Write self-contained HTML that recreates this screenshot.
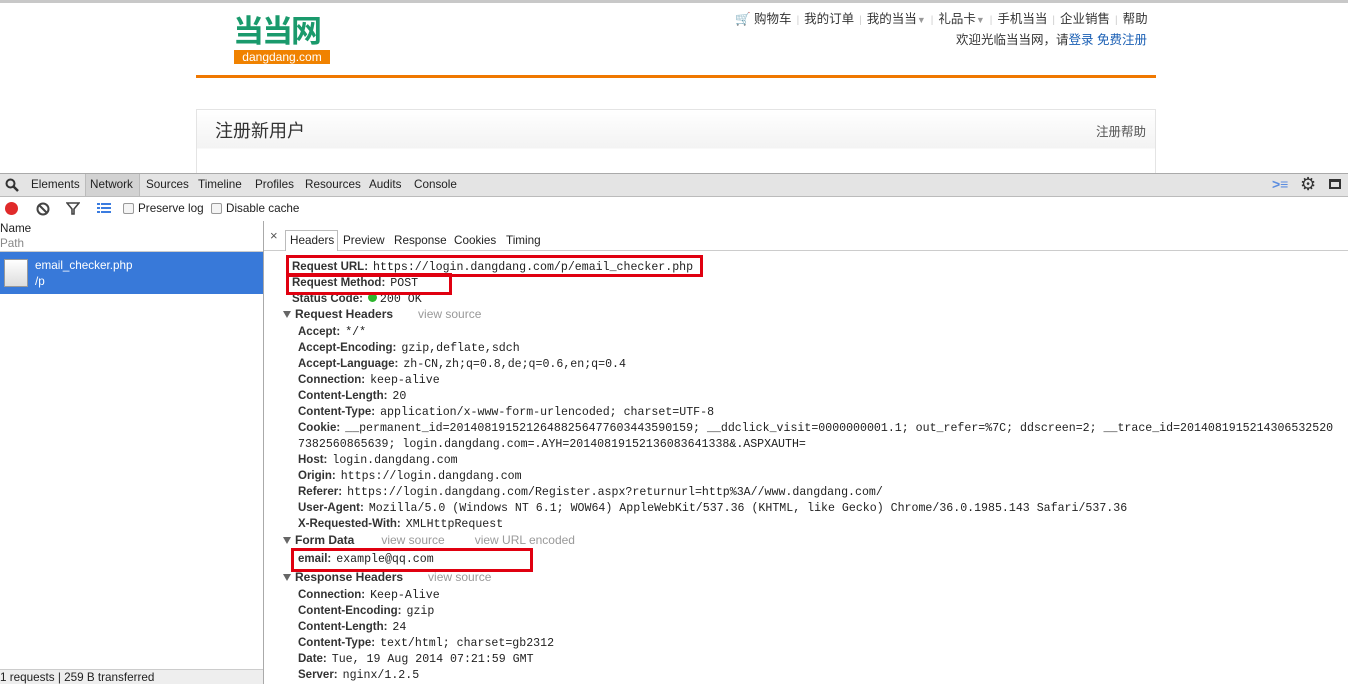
<!DOCTYPE html>
<html><head><meta charset="utf-8"><style>
*{margin:0;padding:0;box-sizing:border-box}
body{width:1348px;height:684px;overflow:hidden;background:#fff;font-family:"Liberation Sans","Noto Sans CJK SC",sans-serif;position:relative;color:#222}
.a{position:absolute;white-space:nowrap}
.l{position:absolute;white-space:nowrap;font-size:12px;line-height:16px}
.l b{color:#333;font-weight:bold;font-size:11.5px;margin-right:5px}
.m{font-family:"Liberation Mono",monospace;font-size:11.6px;color:#222}
.vs{color:#999;font-weight:normal;font-size:12px}
.tri{display:inline-block;width:0;height:0;border-left:4px solid transparent;border-right:4px solid transparent;border-top:7px solid #666;margin-right:4px;vertical-align:0px}
.box{position:absolute;border:3px solid #e00010}
.nav{font-size:12.5px;color:#333}
.nav i{font-style:normal;color:#ccc;margin:0 5px;font-size:10px}
.t{font-size:11.7px}
</style></head><body>
<div class="a" style="left:0;top:0;width:1348px;height:3px;background:#c8c8c8"></div>
<div class="a" style="left:233px;top:15px;font-size:31px;font-weight:bold;color:#1a9a6c;letter-spacing:-2px;line-height:34px">当当网</div>
<div class="a" style="left:234px;top:50px;width:96px;height:14px;background:#f08200;color:#fff;font-size:12px;line-height:14px;text-align:center">dangdang.com</div>
<div class="a nav" style="left:735px;top:8px"><span style="color:#f07800">🛒</span> 购物车<i>|</i>我的订单<i>|</i>我的当当<span style="color:#999;font-size:9px">▼</span><i>|</i>礼品卡<span style="color:#999;font-size:9px">▼</span><i>|</i>手机当当<i>|</i>企业销售<i>|</i>帮助</div>
<div class="a nav" style="left:956px;top:29px">欢迎光临当当网，请<span style="color:#1a5fb4">登录</span> <span style="color:#1a5fb4">免费注册</span></div>
<div class="a" style="left:196px;top:75px;width:960px;height:3px;background:#f07800"></div>
<div class="a" style="left:196px;top:109px;width:960px;height:70px;border:1px solid #e4e4e4;background:linear-gradient(#fff,#f3f3f3 38px,#fff 39px)"></div>
<div class="a" style="left:215px;top:117px;font-size:18px;color:#333">注册新用户</div>
<div class="a" style="left:1096px;top:121px;font-size:12.5px;color:#555">注册帮助</div>
<div class="a" style="left:0;top:173px;width:1348px;height:24px;background:#e4e4e4;border-top:1px solid #aaa;border-bottom:1px solid #bbb"></div>
<svg class="a" style="left:5px;top:178px" width="14" height="14"><circle cx="5.5" cy="5.5" r="4" fill="none" stroke="#333" stroke-width="2"/><line x1="8.5" y1="8.5" x2="13" y2="13" stroke="#333" stroke-width="2.5"/></svg>
<div class="a" style="left:85px;top:174px;width:55px;height:22px;background:#d2d2d2;border-left:1px solid #bbb;border-right:1px solid #bbb"></div>
<div class="a t" style="left:31px;top:178px">Elements</div>
<div class="a t" style="left:90px;top:178px">Network</div>
<div class="a t" style="left:146px;top:178px">Sources</div>
<div class="a t" style="left:198px;top:178px">Timeline</div>
<div class="a t" style="left:255px;top:178px">Profiles</div>
<div class="a t" style="left:305px;top:178px">Resources</div>
<div class="a t" style="left:369px;top:178px">Audits</div>
<div class="a t" style="left:414px;top:178px">Console</div>
<div class="a" style="left:1272px;top:176px;font-size:14px;color:#5b8de0;font-weight:bold">&gt;≡</div>
<div class="a" style="left:1300px;top:174px;font-size:18px;color:#333">⚙</div>
<div class="a" style="left:1329px;top:179px;width:12px;height:10px;border:2px solid #333;border-top-width:3px"></div>
<div class="a" style="left:5px;top:202px;width:13px;height:13px;border-radius:50%;background:#e02a2a"></div>
<svg class="a" style="left:36px;top:202px" width="14" height="14"><circle cx="7" cy="7" r="5.5" fill="none" stroke="#444" stroke-width="2"/><line x1="3" y1="3" x2="11" y2="11" stroke="#444" stroke-width="2"/></svg>
<svg class="a" style="left:66px;top:202px" width="14" height="13"><path d="M1 1H13L8 7V12H6V7Z" fill="none" stroke="#444" stroke-width="1.6"/></svg>
<svg class="a" style="left:97px;top:203px" width="14" height="11"><g fill="#3b7ce0"><rect x="0" y="0" width="3" height="2"/><rect x="4" y="0" width="10" height="2"/><rect x="0" y="4" width="3" height="2"/><rect x="4" y="4" width="10" height="2"/><rect x="0" y="8" width="3" height="2"/><rect x="4" y="8" width="10" height="2"/></g></svg>
<div class="a" style="left:123px;top:203px;width:11px;height:11px;border:1px solid #999;border-radius:2px;background:#f4f4f4"></div>
<div class="a t" style="left:138px;top:202px">Preserve log</div>
<div class="a" style="left:211px;top:203px;width:11px;height:11px;border:1px solid #999;border-radius:2px;background:#f4f4f4"></div>
<div class="a t" style="left:226px;top:202px">Disable cache</div>
<div class="a" style="left:263px;top:221px;width:1px;height:463px;background:#aaa"></div>
<div class="a t" style="left:0;top:221px;line-height:15px">Name<br><span style="color:#888">Path</span></div>
<div class="a" style="left:0;top:251px;width:263px;height:1px;background:#ccc"></div>
<div class="a" style="left:0;top:252px;width:263px;height:42px;background:#3879d9"></div>
<div class="a" style="left:4px;top:259px;width:24px;height:28px;background:linear-gradient(#fff,#ddd);border:1px solid #999"></div>
<div class="a t" style="left:35px;top:258px;line-height:16px;color:#fff">email_checker.php<br>/p</div>
<div class="a" style="left:0;top:669px;width:263px;height:15px;background:#eee;border-top:1px solid #ccc"></div>
<div class="a t" style="left:0;top:671px;color:#222">1 requests | 259 B transferred</div>
<div class="a" style="left:270px;top:228px;font-size:13px;color:#555">×</div>
<div class="a" style="left:264px;top:250px;width:1084px;height:1px;background:#ccc"></div>
<div class="a" style="left:285px;top:230px;width:53px;height:21px;border:1px solid #bbb;border-bottom:none;background:#fff"></div>
<div class="a t" style="left:290px;top:234px">Headers</div>
<div class="a t" style="left:343px;top:234px">Preview</div>
<div class="a t" style="left:394px;top:234px">Response</div>
<div class="a t" style="left:454px;top:234px">Cookies</div>
<div class="a t" style="left:506px;top:234px">Timing</div>
<div class="l" style="left:292px;top:258px"><b>Request URL:</b><span class="m">https://login.dangdang.com/p/email_checker.php</span></div>
<div class="l" style="left:292px;top:274px"><b>Request Method:</b><span class="m">POST</span></div>
<div class="l" style="left:292px;top:290px"><b>Status Code:</b><span style="display:inline-block;width:9px;height:9px;border-radius:50%;background:#2db52d;margin-right:3px"></span><span class="m">200 OK</span></div>
<div class="l" style="left:283px;top:306px"><span class="tri"></span><b style="font-size:12px">Request Headers</b><span class="vs" style="margin-left:20px">view source</span></div>
<div class="l" style="left:298px;top:323px"><b>Accept:</b><span class="m">*/*</span></div>
<div class="l" style="left:298px;top:339px"><b>Accept-Encoding:</b><span class="m">gzip,deflate,sdch</span></div>
<div class="l" style="left:298px;top:355px"><b>Accept-Language:</b><span class="m">zh-CN,zh;q=0.8,de;q=0.6,en;q=0.4</span></div>
<div class="l" style="left:298px;top:371px"><b>Connection:</b><span class="m">keep-alive</span></div>
<div class="l" style="left:298px;top:387px"><b>Content-Length:</b><span class="m">20</span></div>
<div class="l" style="left:298px;top:403px"><b>Content-Type:</b><span class="m">application/x-www-form-urlencoded; charset=UTF-8</span></div>
<div class="l" style="left:298px;top:419px"><b>Cookie:</b><span class="m">__permanent_id=20140819152126488256477603443590159; __ddclick_visit=0000000001.1; out_refer=%7C; ddscreen=2; __trace_id=2014081915214306532520</span></div>
<div class="l" style="left:298px;top:435px"><span class="m">7382560865639; login.dangdang.com=.AYH=20140819152136083641338&amp;.ASPXAUTH=</span></div>
<div class="l" style="left:298px;top:451px"><b>Host:</b><span class="m">login.dangdang.com</span></div>
<div class="l" style="left:298px;top:467px"><b>Origin:</b><span class="m">https://login.dangdang.com</span></div>
<div class="l" style="left:298px;top:483px"><b>Referer:</b><span class="m">https://login.dangdang.com/Register.aspx?returnurl=http%3A//www.dangdang.com/</span></div>
<div class="l" style="left:298px;top:499px"><b>User-Agent:</b><span class="m">Mozilla/5.0 (Windows NT 6.1; WOW64) AppleWebKit/537.36 (KHTML, like Gecko) Chrome/36.0.1985.143 Safari/537.36</span></div>
<div class="l" style="left:298px;top:515px"><b>X-Requested-With:</b><span class="m">XMLHttpRequest</span></div>
<div class="l" style="left:283px;top:532px"><span class="tri"></span><b style="font-size:12px">Form Data</b><span class="vs" style="margin-left:22px">view source</span><span class="vs" style="margin-left:30px">view URL encoded</span></div>
<div class="l" style="left:298px;top:550px"><b>email:</b><span class="m">example@qq.com</span></div>
<div class="l" style="left:283px;top:569px"><span class="tri"></span><b style="font-size:12px">Response Headers</b><span class="vs" style="margin-left:20px">view source</span></div>
<div class="l" style="left:298px;top:586px"><b>Connection:</b><span class="m">Keep-Alive</span></div>
<div class="l" style="left:298px;top:602px"><b>Content-Encoding:</b><span class="m">gzip</span></div>
<div class="l" style="left:298px;top:618px"><b>Content-Length:</b><span class="m">24</span></div>
<div class="l" style="left:298px;top:634px"><b>Content-Type:</b><span class="m">text/html; charset=gb2312</span></div>
<div class="l" style="left:298px;top:650px"><b>Date:</b><span class="m">Tue, 19 Aug 2014 07:21:59 GMT</span></div>
<div class="l" style="left:298px;top:666px"><b>Server:</b><span class="m">nginx/1.2.5</span></div>
<div class="box" style="left:286px;top:255px;width:417px;height:22px"></div>
<div class="box" style="left:286px;top:273px;width:166px;height:22px"></div>
<div class="box" style="left:291px;top:548px;width:242px;height:24px"></div>
</body></html>
